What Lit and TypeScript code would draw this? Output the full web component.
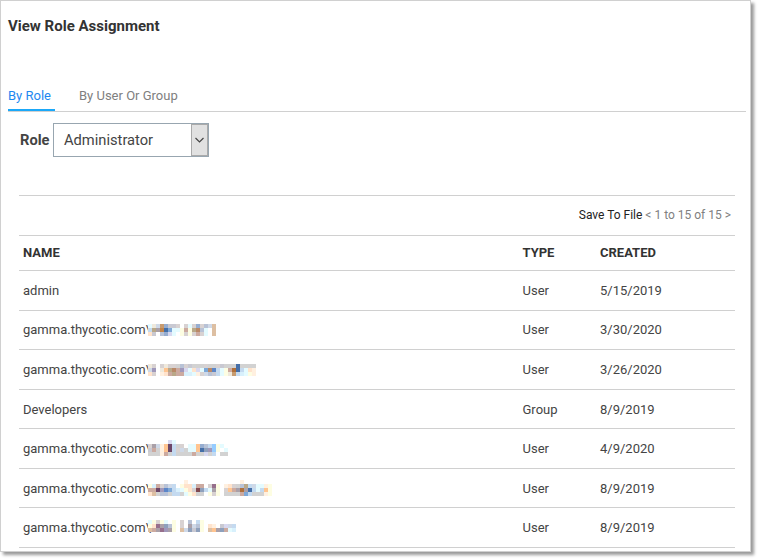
import { LitElement, html, css, svg, nothing } from "lit";
import { customElement, property } from "lit/decorators.js";

const TINTS: Record<string, string> = {
  a: "#d8d2d2", b: "#efe9dc", c: "#cfd9e8", d: "#c79b70", e: "#96add0", f: "#c9c9d2",
  g: "#d8f0fc", h: "#b9a888", i: "#aaa0a8", j: "#c2844a", k: "#456fa8", l: "#7da8d8",
  m: "#ffe3cc", n: "#fdfde2", o: "#ccaaa0", p: "#b98968", q: "#b8c2d6", r: "#ddbfa2",
  s: "#ffc490", t: "#6b4668", u: "#d2d2d2", v: "#8ea0bc", w: "#e4fbff", x: "#96ccff",
  y: "#a098ba", z: "#fff0e0", A: "#804850", B: "#b0703a", C: "#5c86c8", D: "#c4daf0",
  E: "#966f8c", F: "#d8d8f0",
};

interface Mask { top: number; cells: string[] }
interface Row { name: string; type: string; created: string; mask?: Mask }

const DOMAIN = "gamma.thycotic.com\\";

const ROWS: Row[] = [
  { name: "admin", type: "User", created: "5/15/2019" },
  { name: DOMAIN, type: "User", created: "3/30/2020", mask: { top: -2, cells: [
    "",
    "wbcdeffa.awaeaqcr",
    "Dhijklwwnonhpqw.r",
    "mf.qeFw.nanaoaw.r"] } },
  { name: DOMAIN, type: "User", created: "3/26/2020", mask: { top: -2, cells: [
    "",
    "ba.abaauqafuuuauuafuuukuuuu",
    "cy.bshpoyFwmFwlpCDwnoBkDwmz",
    "ma.zmohooggwzacqfDwnbdDgwnz"] } },
  { name: "Developers", type: "Group", created: "8/9/2019" },
  { name: DOMAIN, type: "User", created: "4/9/2020", mask: { top: -1, cells: [
    ".....Fw.......",
    "aiczstDua.wwseqDxnw.",
    "fouzstDacuwwskvyxn.w",
    "uuuzouDuuuuouuFuD.uu"] } },
  { name: DOMAIN, type: "User", created: "8/9/2019", mask: { top: -1, cells: [
    ".........z.............z",
    "ngoaqcD.nmmgoo.aEn.zmauqhDcwwzn",
    "ootyClDgwnmaAvDwin.asoiBikDwDsn",
    "mruqquDDuwnmuu.nan.uuuuolDuuuzn"] } },
  { name: DOMAIN, type: "User", created: "8/9/2019", mask: { top: -4, cells: [
    "",
    "wnanw.n.a.q.Dn",
    "nmEivqn.a.icqn.mz.fFcD",
    "roiEyin.rcvfvn.rsivowg"] } },
];

@customElement("pixel-mask")
export class PixelMask extends LitElement {
  @property({ attribute: false }) rows: string[] = [];
  static styles = css`:host { display: block; height: 16px; } svg { display: block; }`;
  render() {
    return html`<svg width="128" height="16" shape-rendering="crispEdges">
      <rect y="4" width="128" height="12" fill="#fff"></rect>
      ${this.rows.map((r, y) =>
      [...r].map((c, x) => (TINTS[c] ? svg`<rect x=${x * 4} y=${y * 4} width="4" height="4" fill=${TINTS[c]}></rect>` : nothing)))}</svg>`;
  }
}

@customElement("app-root")
export class AppRoot extends LitElement {
  static styles = css`
    :host { display: block; height: 560px; background: #fff; overflow: hidden; font: 13px/16px Roboto, sans-serif; color: #444; }
    * { box-sizing: border-box; }
    .panel { width: 751px; height: 552px; border: 1px solid #d0d0d0; background: #fff; box-shadow: 3px 3px 3px rgba(0,0,0,.4); overflow: hidden; }
    h1 { margin: 15px 0 0 7px; font-size: 15px; line-height: 20px; font-weight: 700; color: #333; }
    .tabs { display: flex; gap: 24px; height: 27px; margin: 49px 4px 0 7px; border-bottom: 1px solid #d0d0d0; color: #808080; }
    .tab { height: 26px; padding-top: 3px; }
    .on { width: 47px; color: #1e88f0; border-bottom: 2px solid #1ba8f8; }
    .role { display: flex; align-items: center; margin: 11px 0 0 19px; height: 34px; font-size: 14.7px; }
    .role b { width: 33px; }
    .select { display: flex; width: 156px; height: 34px; border: 1px solid #98a6b0; align-items: center; padding-left: 10px; justify-content: space-between; }
    .arrow { width: 17px; height: 32px; border: 1px solid #aaa; background: #e1e1e1; display: grid; place-items: center; }
    .arrow svg { display: block; }
    .list { margin: 38px 15px 0 18px; border-top: 1px solid #d0d0d0; }
    .pager { height: 39px; padding: 11px 4px 0 0; text-align: right; font-size: 12px; color: #808080; }
    .pager span { color: #222; }
    .row { display: grid; grid-template-columns: 499.5px 77.5px 1fr; padding: 12px 0 0 4px; height: 39px; border-top: 1px solid #d0d0d0; }
    .row:nth-child(odd) { height: 40px; }
    .row.head { height: 35px; padding-top: 9px; font-weight: 700; color: #333; }
    .row:nth-child(4) { padding-top: 11px; }
    .name { display: flex; height: 16px; }
    .domain { width: 125px; white-space: nowrap; }
  `;
  render() {
    return html`<div class="panel">
      <h1>View Role Assignment</h1>
      <div class="tabs"><div class="tab on">By Role</div><div class="tab">By User Or Group</div></div>
      <div class="role"><b>Role</b><div class="select">Administrator<div class="arrow">
        <svg width="9" height="6" viewBox="0 0 9 6" fill="none" stroke="#444" stroke-width="1.2"><path d="M.5 1 4.5 5 8.5 1"/></svg></div></div></div>
      <div class="list">
        <div class="pager"><span>Save To File</span> &lt; 1 to 15 of 15 &gt;</div>
        <div class="row head"><div>NAME</div><div>TYPE</div><div>CREATED</div></div>
        ${ROWS.map((r) => html`<div class="row">
          <div class="name">${r.mask
            ? html`<span class="domain">${r.name}</span><pixel-mask .rows=${r.mask.cells} style="margin-top:${r.mask.top}px"></pixel-mask>`
            : r.name}</div>
          <div>${r.type}</div><div>${r.created}</div></div>`)}
        <div class="row"></div>
      </div>
    </div>`;
  }
}
